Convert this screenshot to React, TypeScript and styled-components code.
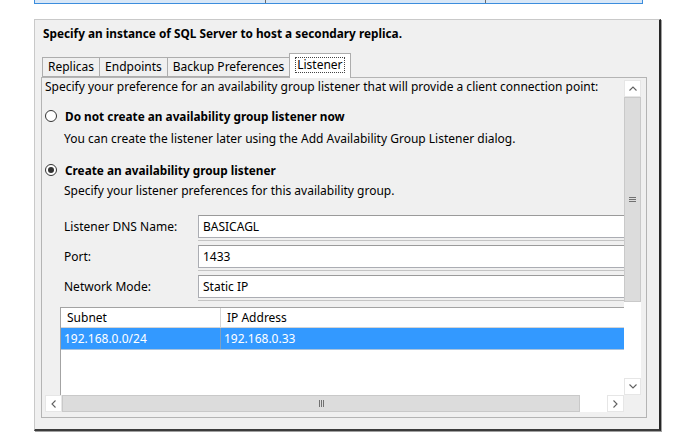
import React from 'react';
import styled, { createGlobalStyle } from 'styled-components';

const GlobalStyle = createGlobalStyle`
  html, body {
    margin: 0;
    background: #fff;
  }
  body {
    font-family: "Noto Sans", "Open Sans", sans-serif;
    font-size: 12px;
    color: #000;
  }
`;

const Page = styled.div`
  width: 696px;
  height: 441px;
  overflow: hidden;
  padding-left: 34px;
  box-sizing: border-box;
`;

const TopStrip = styled.div`
  display: flex;
  width: 609px;
  height: 4px;
  box-sizing: border-box;
  border: 1px solid #3b8ddd;
  border-top: none;
  background: #d8e7f7;
`;

const StripCell = styled.div<{ $w?: number }>`
  width: ${(p) => (p.$w ? `${p.$w}px` : 'auto')};
  flex: ${(p) => (p.$w ? 'none' : 1)};
  border-right: 1px solid #6a6a6a;

  &:last-child {
    border-right: none;
  }
`;

const Window = styled.div`
  margin-top: 15px;
  width: 627px;
  height: 412px;
  box-sizing: border-box;
  background: #f0f0f0;
  border-top: 1px solid #c9c9c9;
  border-left: 1px solid #c9c9c9;
  border-right: 2px solid #262626;
  border-bottom: 2px solid #3c3c3c;
  box-shadow: 1px 1px 0 #a0a0a0;
`;

const Title = styled.div`
  padding: 5px 0 0 8px;
  font-weight: 700;
  font-size: 11.8px;
  line-height: 16px;
  white-space: nowrap;
`;

const TabRow = styled.div`
  display: flex;
  align-items: flex-end;
  height: 24px;
  margin: 12px 0 0 7px;
`;

const Tab = styled.div<{ $active?: boolean }>`
  display: flex;
  align-items: center;
  box-sizing: border-box;
  height: ${(p) => (p.$active ? 25 : 20)}px;
  margin-bottom: ${(p) => (p.$active ? -1 : 0)}px;
  padding: 0 5px ${(p) => (p.$active ? 3 : 0)}px;
  border: 1px solid #adadad;
  border-bottom: ${(p) => (p.$active ? 'none' : '1px solid #adadad')};
  background: ${(p) => (p.$active ? '#fff' : '#f0f0f0')};
  line-height: 16px;
  white-space: nowrap;
  position: relative;
  z-index: ${(p) => (p.$active ? 1 : 0)};

  & + & {
    margin-left: -1px;
  }
`;

const FocusRect = styled.span`
  border: 1px dotted #444;
  padding: 0 1px;
  line-height: 14px;
`;

const Panel = styled.div`
  margin-left: 6px;
  width: 606px;
  height: 341px;
  box-sizing: border-box;
  border: 1px solid #b4b4b4;
  padding: 0 5px 5px 3px;
  background: #f0f0f0;
`;

const ScrollArea = styled.div`
  display: grid;
  grid-template-columns: 579px 17px;
  grid-template-rows: 317px 17px;
`;

const Viewport = styled.div`
  overflow: hidden;
`;

const Description = styled.div`
  margin-top: 1px;
  line-height: 16px;
  white-space: nowrap;
`;

const Option = styled.div<{ $mt: number }>`
  display: flex;
  align-items: center;
  gap: 8px;
  margin-top: ${(p) => p.$mt}px;
  font-weight: 700;
  font-size: 11.8px;
  line-height: 16px;
  white-space: nowrap;
`;

const Radio = styled.span<{ $checked?: boolean }>`
  display: flex;
  align-items: center;
  justify-content: center;
  width: 12px;
  height: 12px;
  box-sizing: border-box;
  border: 1px solid #333;
  border-radius: 50%;
  background: #fff;

  &::after {
    content: '';
    display: ${(p) => (p.$checked ? 'block' : 'none')};
    width: 6px;
    height: 6px;
    border-radius: 50%;
    background: #333;
  }
`;

const Hint = styled.div<{ $mt: number }>`
  margin-top: ${(p) => p.$mt}px;
  padding-left: 19px;
  line-height: 16px;
  white-space: nowrap;
`;

const Fields = styled.div`
  display: grid;
  grid-template-columns: 134px 470px;
  row-gap: 7px;
  margin-top: 16px;
  padding-left: 19px;
`;

const FieldLabel = styled.div`
  align-self: center;
  line-height: 16px;
  white-space: nowrap;
`;

const TextBox = styled.div`
  display: flex;
  align-items: center;
  height: 23px;
  box-sizing: border-box;
  padding-left: 4px;
  border: 1px solid #abadb3;
  border-top-color: #9a9a9a;
  background: #fff;
  box-shadow: 0 2px 0 #f0f0f0, 0 3px 0 #c4c4c4;
`;

const DataGrid = styled.div`
  margin: 9px 0 0 15px;
  width: 620px;
  height: 110px;
  box-sizing: border-box;
  border: 1px solid #a3a3a3;
  background: #fff;
`;

const GridRow = styled.div<{ $header?: boolean; $selected?: boolean }>`
  display: grid;
  grid-template-columns: 160px 1fr;
  height: ${(p) => (p.$header ? 20 : 22)}px;
  box-sizing: border-box;
  border-bottom: 1px solid ${(p) => (p.$header ? '#d5d5d5' : '#a9c3dd')};
  background: ${(p) => (p.$selected ? '#3399ff' : '#fff')};
  color: ${(p) => (p.$selected ? '#fff' : '#000')};
`;

const GridCell = styled.div<{ $header?: boolean; $selected?: boolean }>`
  display: flex;
  align-items: center;
  padding-left: ${(p) => (p.$header ? 6 : 3)}px;
  border-right: 1px solid ${(p) => (p.$selected ? '#7f9fbf' : '#d5d5d5')};
  line-height: 16px;
  white-space: nowrap;
`;

const VScroll = styled.div`
  display: flex;
  flex-direction: column;
  padding-top: 2px;
`;

const HScroll = styled.div`
  display: flex;
  background: #fff;
`;

const ArrowButton = styled.div<{ $size: number; $vertical?: boolean }>`
  display: flex;
  align-items: center;
  justify-content: center;
  flex: none;
  ${(p) => (p.$vertical ? `height: ${p.$size}px;` : `width: ${p.$size}px;`)}
  box-sizing: border-box;
  background: #fff;
  border: 1px solid #e6e6e6;
`;

const Thumb = styled.div<{ $size: number; $vertical?: boolean }>`
  display: flex;
  align-items: center;
  justify-content: center;
  flex: none;
  ${(p) => (p.$vertical ? `height: ${p.$size}px;` : `width: ${p.$size}px;`)}
  box-sizing: border-box;
  background: #dcdcdc;
  border: 1px solid #c9c9c9;
`;

const Track = styled.div`
  flex: 1;
  background: #fff;
`;

const Corner = styled.div`
  background: #f0f0f0;
`;

const Chevron = ({ dir }: { dir: 'up' | 'down' | 'left' | 'right' }) => {
  const d = {
    up: 'M0.5 4.5 L4 1 L7.5 4.5',
    down: 'M0.5 0.5 L4 4 L7.5 0.5',
    left: 'M4.5 0.5 L1 4 L4.5 7.5',
    right: 'M0.5 0.5 L4 4 L0.5 7.5',
  }[dir];
  const vertical = dir === 'up' || dir === 'down';
  return (
    <svg width={vertical ? 8 : 5} height={vertical ? 5 : 8} viewBox={vertical ? '0 0 8 5' : '0 0 5 8'}>
      <path d={d} stroke="#606060" strokeWidth="1.1" fill="none" />
    </svg>
  );
};

const Grip = ({ vertical }: { vertical?: boolean }) =>
  vertical ? (
    <svg width="7" height="5" viewBox="0 0 7 5">
      <path d="M0 0.5 H7 M0 2.5 H7 M0 4.5 H7" stroke="#707070" strokeWidth="1" />
    </svg>
  ) : (
    <svg width="5" height="7" viewBox="0 0 5 7">
      <path d="M0.5 0 V7 M2.5 0 V7 M4.5 0 V7" stroke="#707070" strokeWidth="1" />
    </svg>
  );

const tabs = ['Replicas', 'Endpoints', 'Backup Preferences', 'Listener'];

const fields = [
  { label: 'Listener DNS Name:', value: 'BASICAGL' },
  { label: 'Port:', value: '1433' },
  { label: 'Network Mode:', value: 'Static IP' },
];

export default function App() {
  return (
    <>
      <GlobalStyle />
      <Page>
        <TopStrip>
          <StripCell $w={230} />
          <StripCell $w={219} />
          <StripCell />
        </TopStrip>
        <Window>
          <Title>Specify an instance of SQL Server to host a secondary replica.</Title>
          <TabRow>
            {tabs.map((t) =>
              t === 'Listener' ? (
                <Tab key={t} $active>
                  <FocusRect>{t}</FocusRect>
                </Tab>
              ) : (
                <Tab key={t}>{t}</Tab>
              ),
            )}
          </TabRow>
          <Panel>
            <ScrollArea>
              <Viewport>
                <Description>
                  Specify your preference for an availability group listener that will provide a client connection point:
                </Description>
                <Option $mt={13}>
                  <Radio />
                  Do not create an availability group listener now
                </Option>
                <Hint $mt={7}>You can create the listener later using the Add Availability Group Listener dialog.</Hint>
                <Option $mt={15}>
                  <Radio $checked />
                  Create an availability group listener
                </Option>
                <Hint $mt={5}>Specify your listener preferences for this availability group.</Hint>
                <Fields>
                  {fields.map((f) => (
                    <React.Fragment key={f.label}>
                      <FieldLabel>{f.label}</FieldLabel>
                      <TextBox>{f.value}</TextBox>
                    </React.Fragment>
                  ))}
                </Fields>
                <DataGrid>
                  <GridRow $header>
                    <GridCell $header>Subnet</GridCell>
                    <GridCell $header>IP Address</GridCell>
                  </GridRow>
                  <GridRow $selected>
                    <GridCell $selected>192.168.0.0/24</GridCell>
                    <GridCell $selected>192.168.0.33</GridCell>
                  </GridRow>
                </DataGrid>
              </Viewport>
              <VScroll>
                <ArrowButton $vertical $size={17}>
                  <Chevron dir="up" />
                </ArrowButton>
                <Thumb $vertical $size={205}>
                  <Grip vertical />
                </Thumb>
                <Track />
                <ArrowButton $vertical $size={17}>
                  <Chevron dir="down" />
                </ArrowButton>
              </VScroll>
              <HScroll>
                <ArrowButton $size={17}>
                  <Chevron dir="left" />
                </ArrowButton>
                <Thumb $size={518}>
                  <Grip />
                </Thumb>
                <Track />
                <ArrowButton $size={17}>
                  <Chevron dir="right" />
                </ArrowButton>
              </HScroll>
              <Corner />
            </ScrollArea>
          </Panel>
        </Window>
      </Page>
    </>
  );
}
